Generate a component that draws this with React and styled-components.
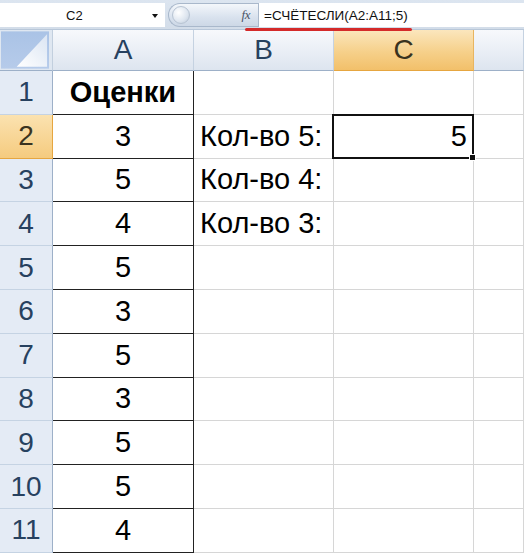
import React from "react";
import styled, { createGlobalStyle, css } from "styled-components";

const Global = createGlobalStyle`
  html, body { margin: 0; padding: 0; background: #fff; overflow: hidden; }
  body { font-family: "Liberation Sans", Arial, sans-serif; }
`;

const Page = styled.div`
  width: 524px;
  height: 560px;
  position: relative;
  overflow: hidden;
  background: #fff;
`;

const FormulaBar = styled.div`
  height: 30px;
  box-sizing: border-box;
  padding: 3px 0 2px 0;
  display: flex;
  align-items: stretch;
  background: linear-gradient(#dce5f0, #d3dde9);
  border-bottom: 1px solid #b8c7d9;
`;

const NameBox = styled.div`
  width: 165px;
  box-sizing: border-box;
  background: #fff;
  display: flex;
  align-items: center;
  position: relative;
  font-size: 13px;
  color: #111;
  padding-left: 66px;
`;

const DropArrow = styled.span`
  position: absolute;
  left: 152px;
  top: 11px;
  width: 0;
  height: 0;
  border-left: 3.5px solid transparent;
  border-right: 3.5px solid transparent;
  border-top: 4px solid #111;
`;

const FxPill = styled.div`
  width: 90px;
  margin-left: 3px;
  box-sizing: border-box;
  border-radius: 12px 0 0 12px;
  background: linear-gradient(#f4f7fb, #d9e2ee 60%, #cdd8e6);
  border: 1px solid #a9b8cb;
  border-right: none;
  display: flex;
  align-items: center;
  justify-content: space-between;
  padding: 0 8px 0 3px;
`;

const Knob = styled.span`
  width: 16px;
  height: 16px;
  border-radius: 50%;
  background: radial-gradient(circle at 35% 35%, #ffffff, #dde5ef 60%, #b9c6d6);
  border: 1px solid #b8c4d3;
`;

const Fx = styled.span`
  font-family: "Liberation Serif", "Times New Roman", serif;
  font-style: italic;
  font-size: 13px;
  color: #4a5466;
  letter-spacing: -0.5px;
`;

const FormulaInput = styled.div`
  flex: 1;
  background: #fff;
  border-left: 1px solid #a9b8cb;
  display: flex;
  align-items: center;
  padding-left: 5px;
  font-size: 13.5px;
  color: #111;
  white-space: nowrap;
`;

const RedMark = styled.div`
  position: absolute;
  left: 245px;
  top: 28px;
  width: 167px;
  height: 3px;
  border-radius: 2px;
  background: #d42a2a;
`;

const Sheet = styled.div`
  display: grid;
  grid-template-columns: 53px 141px 140px 140px 1fr;
  grid-template-rows: 41px repeat(11, 43.8px);
`;

const base = css`
  box-sizing: border-box;
  display: flex;
  align-items: center;
  white-space: nowrap;
`;

const Corner = styled.div`
  ${base};
  overflow: hidden;
  background: #dfe7f1;
  border-right: 1px solid #c2cfde;
  border-bottom: 1px solid #9db0c8;
  padding: 1px 3px 1px 1px;
`;

const ColHead = styled.div`
  ${base};
  justify-content: center;
  font-size: 28px;
  color: ${(p) => (p.$sel ? "#3a3320" : "#27415f")};
  background: ${(p) =>
    p.$sel
      ? "linear-gradient(#fbe6bd, #f6d08a 55%, #f2c06a)"
      : "linear-gradient(#f7f9fc, #e9eef5 55%, #dde5ef)"};
  border-right: 1px solid ${(p) => (p.$sel ? "#e8b560" : "#c5d2e1")};
  border-bottom: 1px solid ${(p) => (p.$sel ? "#e6a640" : "#9db0c8")};
`;

const RowHead = styled.div`
  ${base};
  justify-content: center;
  font-size: 28px;
  color: ${(p) => (p.$sel ? "#3a3320" : "#27415f")};
  background: ${(p) =>
    p.$sel ? "linear-gradient(#fbe2b0, #f5cb7f)" : "#e4ebf5"};
  border-right: 1px solid ${(p) => (p.$sel ? "#e6a640" : "#9db0c8")};
  border-bottom: 1px solid ${(p) => (p.$sel ? "#e6a640" : "#c5d3e3")};
`;

const Cell = styled.div`
  ${base};
  position: relative;
  font-size: 29px;
  color: #000;
  padding: 0 6px;
  z-index: ${(p) => (p.$active ? 2 : "auto")};
  justify-content: ${(p) =>
    p.$align === "center" ? "center" : p.$align === "right" ? "flex-end" : "flex-start"};
  font-weight: ${(p) => (p.$bold ? 700 : 400)};
  border-right: 1px solid ${(p) => (p.$boxed ? "#222" : "#d6d6d6")};
  border-bottom: 1px solid ${(p) => (p.$boxed ? "#222" : "#d6d6d6")};
`;

const Selection = styled.div`
  position: absolute;
  top: -1px;
  left: -2px;
  right: -1px;
  bottom: -1px;
  border: 2.5px solid #111;
  pointer-events: none;
`;

const Handle = styled.div`
  position: absolute;
  right: -4px;
  bottom: -4px;
  width: 5px;
  height: 5px;
  background: #111;
  border: 1px solid #fff;
`;

const grades = ["3", "5", "4", "5", "3", "5", "3", "5", "5", "4"];
const labels = { 2: "Кол-во 5:", 3: "Кол-во 4:", 4: "Кол-во 3:" };

function CornerArt() {
  return (
    <svg width="49" height="38" viewBox="0 0 49 38">
      <defs>
        <linearGradient id="cg" x1="0" y1="0" x2="0" y2="1">
          <stop offset="0" stopColor="#aac3e6" />
          <stop offset="1" stopColor="#b6cbea" />
        </linearGradient>
        <linearGradient id="tg" x1="0" y1="1" x2="1" y2="0">
          <stop offset="0" stopColor="#ffffff" />
          <stop offset="1" stopColor="#dbe5f3" />
        </linearGradient>
      </defs>
      <rect x="0" y="0" width="49" height="38" fill="url(#cg)" />
      <polygon points="16,36 47,3 47,36" fill="url(#tg)" />
    </svg>
  );
}

export default function App() {
  const rows = [];
  for (let r = 1; r <= 11; r++) {
    const sel = r === 2;
    rows.push(
      <RowHead key={`h${r}`} $sel={sel}>
        {r}
      </RowHead>
    );
    rows.push(
      <Cell key={`a${r}`} $boxed $align="center" $bold={r === 1}>
        {r === 1 ? "Оценки" : grades[r - 2]}
      </Cell>
    );
    rows.push(<Cell key={`b${r}`}>{labels[r] || ""}</Cell>);
    rows.push(
      <Cell key={`c${r}`} $align="right" $active={sel}>
        {sel ? "5" : ""}
        {sel && (
          <Selection>
            <Handle />
          </Selection>
        )}
      </Cell>
    );
    rows.push(<Cell key={`d${r}`} />);
  }

  return (
    <Page>
      <Global />
      <FormulaBar>
        <NameBox>
          C2
          <DropArrow />
        </NameBox>
        <FxPill>
          <Knob />
          <Fx>fx</Fx>
        </FxPill>
        <FormulaInput>=СЧЁТЕСЛИ(A2:A11;5)</FormulaInput>
      </FormulaBar>
      <RedMark />
      <Sheet>
        <Corner>
          <CornerArt />
        </Corner>
        <ColHead>A</ColHead>
        <ColHead>B</ColHead>
        <ColHead $sel>C</ColHead>
        <ColHead />
        {rows}
      </Sheet>
    </Page>
  );
}
